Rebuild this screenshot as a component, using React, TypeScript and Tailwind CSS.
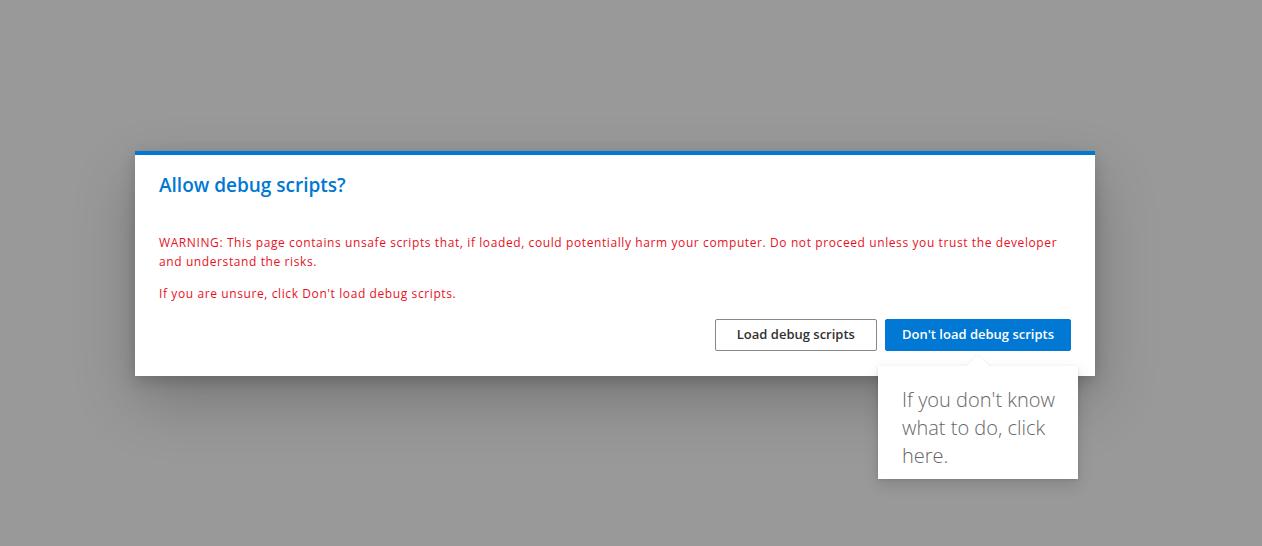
import React from "react";

const font = { fontFamily: '"Open Sans", "Noto Sans", sans-serif' };

function DebugCallout() {
  return <div className="absolute left-1/2 top-full z-10 mt-[15px] w-[200px] -translate-x-1/2 bg-white pb-[9px] pl-[24px] pr-[20px] pt-[20px] shadow-[0_6.4px_14.4px_0_rgba(0,0,0,.132),0_1.2px_3.6px_0_rgba(0,0,0,.108)]">
    <span className="absolute left-1/2 top-[-8px] h-4 w-4 -translate-x-1/2 rotate-45 bg-white shadow-[0_0_3px_0_rgba(0,0,0,.08)]" />
    <span className="absolute inset-x-0 top-0 h-3 bg-white" />
    <p className="relative text-[20px] font-light leading-[28px] text-[#666]">If you don't know what to do, click here.</p>
  </div>;
}

export default function App() {
  return <div className="h-[546px] w-full overflow-hidden bg-[#999] pl-[135px] pt-[151px]" style={font}>
    <div className="w-[960px] border-t-4 border-[#0078d4] bg-white px-6 pb-[25px] pt-4 shadow-[0_25.6px_57.6px_0_rgba(0,0,0,.22),0_4.8px_14.4px_0_rgba(0,0,0,.18)]">
      <h1 className="text-[19px] font-semibold leading-[28px] text-[#0078d4]">Allow debug scripts?</h1>
      <div className="mt-[34px] text-[12px] leading-[19px] tracking-[0.6px] text-[#e81123]">
        <p>WARNING: This page contains unsafe scripts that, if loaded, could potentially harm your computer. Do not proceed unless you trust the developer and understand the risks.</p>
        <p className="mt-[13px]">If you are unsure, click Don't load debug scripts.</p>
      </div>
      <div className="mt-[16px] flex justify-end gap-2">
        <button className="h-8 rounded-[2px] border border-[#8a8886] bg-white px-[21px] text-[13px] font-semibold text-[#323130]">Load debug scripts</button>
        <div className="relative">
          <button className="h-8 rounded-[2px] border border-[#0078d4] bg-[#0078d4] px-4 text-[13px] font-semibold text-white">Don't load debug scripts</button>
          <DebugCallout />
        </div>
      </div>
    </div>
  </div>;
}
